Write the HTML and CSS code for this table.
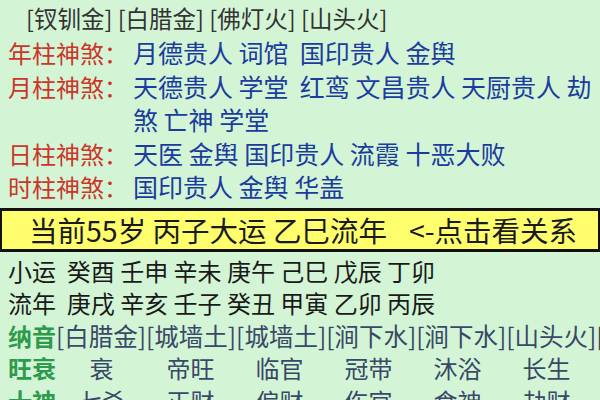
FILE: index.html
```html
<!DOCTYPE html>
<html lang="zh">
<head>
<meta charset="utf-8">
<link rel="stylesheet" href="styles.css">
</head>
<body>
<div class="page">
  <div class="nayin-top">[钗钏金] [白腊金] [佛灯火] [山头火]</div>
  <div class="shensha">
    <div class="ss-row"><span class="ss-label">年柱神煞：</span><span class="ss-val">月德贵人 词馆&nbsp; 国印贵人 金舆</span></div>
    <div class="ss-row"><span class="ss-label">月柱神煞：</span><span class="ss-val">天德贵人 学堂&nbsp; 红鸾 文昌贵人 天厨贵人 劫煞 亡神 学堂</span></div>
    <div class="ss-row"><span class="ss-label">日柱神煞：</span><span class="ss-val">天医 金舆 国印贵人 流霞 十恶大败</span></div>
    <div class="ss-row"><span class="ss-label">时柱神煞：</span><span class="ss-val">国印贵人 金舆 华盖</span></div>
  </div>
  <div class="dayun-bar"><span>当前55岁 丙子大运 乙巳流年</span><span class="dayun-link">&lt;-点击看关系</span></div>
  <div class="lower">
    <div class="plain-row">小运&nbsp; 癸酉 壬申 辛未 庚午 己巳 戊辰 丁卯</div>
    <div class="plain-row">流年&nbsp; 庚戌 辛亥 壬子 癸丑 甲寅 乙卯 丙辰</div>
    <div class="nayin-row"><span class="g-label">纳音</span>[白腊金][城墙土][城墙土][涧下水][涧下水][山头火][</div>
    <div class="grid-row">
      <span class="g-label">旺衰</span>
      <span class="cell">衰</span><span class="cell">帝旺</span><span class="cell">临官</span><span class="cell">冠带</span><span class="cell">沐浴</span><span class="cell">长生</span>
    </div>
    <div class="grid-row">
      <span class="g-label">十神</span>
      <span class="cell">七杀</span><span class="cell">正财</span><span class="cell">偏财</span><span class="cell">伤官</span><span class="cell">食神</span><span class="cell">劫财</span>
    </div>
  </div>
</div>
</body>
</html>
```

FILE: styles.css
```css
html, body {
  margin: 0;
  padding: 0;
  background: #d3f5d6;
  overflow: hidden;
}
body {
  width: 600px;
  height: 400px;
  font-family: "Noto Sans CJK SC", "Noto Sans", sans-serif;
}
.page {
  padding-top: 1px;
}
.nayin-top {
  padding-left: 26px;
  font-size: 23.5px;
  line-height: 34px;
  color: #333;
  white-space: nowrap;
}
.shensha {
  margin-top: 1px;
  padding-left: 8px;
}
.ss-row {
  display: flex;
  font-size: 24px;
  line-height: 33.5px;
}
.ss-label {
  color: #cc3528;
  flex: 0 0 auto;
  width: 125px;
  white-space: nowrap;
}
.ss-val {
  color: #1b3c9e;
  flex: 1;
  font-size: 25px;
  padding-right: 4px;
}
.dayun-bar {
  margin-top: 4px;
  height: 38px;
  display: flex;
  gap: 22px;
  border-top: 3px solid #111;
  border-bottom: 3px solid #111;
  border-left: 2px solid #111;
  border-right: 2px solid #111;
  background: #ffff6e;
  color: #1a1a1a;
  font-size: 28.5px;
  line-height: 38px;
  padding-left: 27px;
  white-space: nowrap;
}
.lower {
  margin-top: 3px;
}
.plain-row {
  padding-left: 8px;
  font-size: 24px;
  line-height: 32.5px;
  color: #1a1a1a;
  white-space: nowrap;
}
.nayin-row {
  padding-left: 8px;
  font-size: 24.5px;
  line-height: 32.5px;
  color: #3a4868;
  white-space: nowrap;
}
.g-label {
  color: #2e9a4c;
  font-weight: bold;
  font-size: 24px;
}
.grid-row {
  display: grid;
  grid-template-columns: 49px repeat(6, 89px);
  padding-left: 8px;
  font-size: 24px;
  line-height: 32.5px;
  color: #3a4868;
  white-space: nowrap;
}
.cell {
  text-align: center;
}
```
